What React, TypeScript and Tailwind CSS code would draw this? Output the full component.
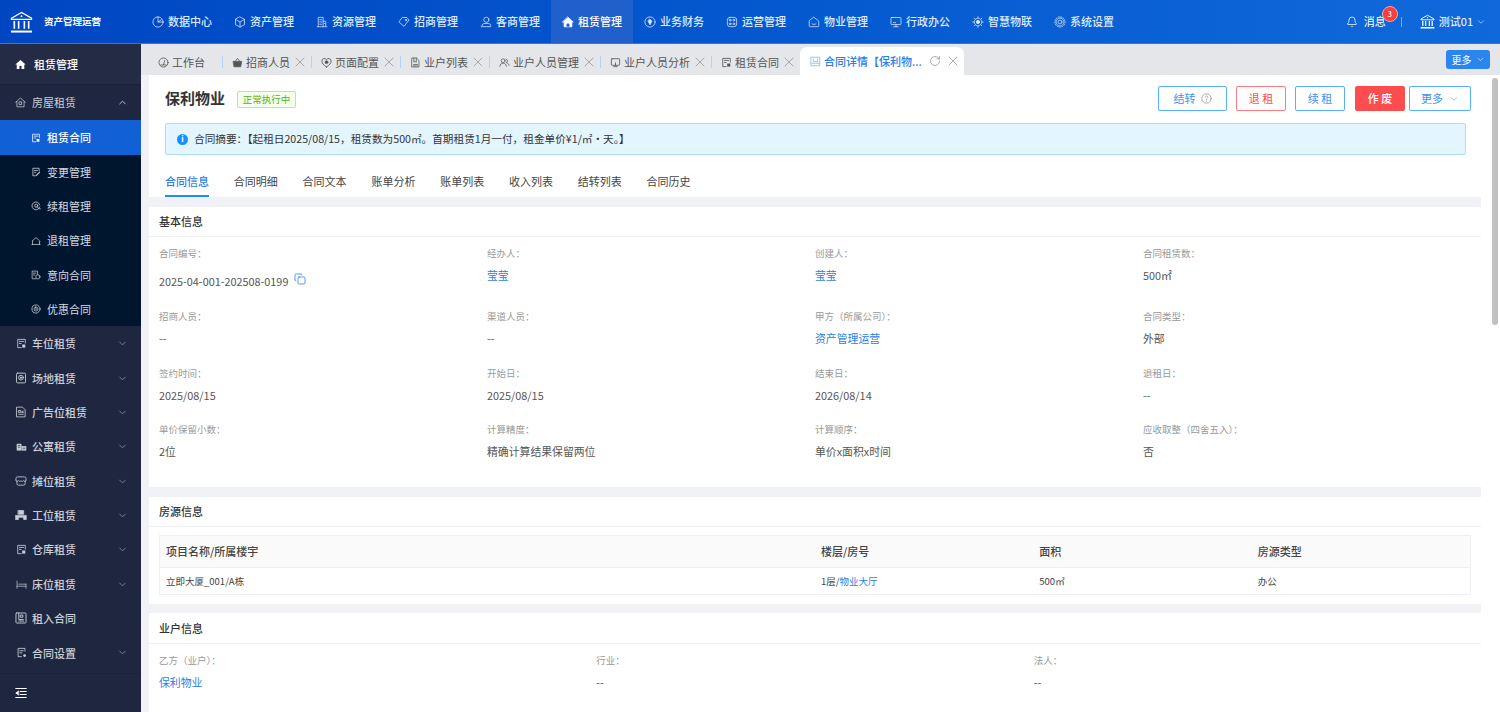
import React from "react";
import { ChevronDown, ChevronUp, X, RotateCw, Copy, Bell } from "lucide-react";

type IconProps = { size?: number; className?: string };
const mk = (children: React.ReactNode, sw = 1) =>
  function Icon({ size = 12, className }: IconProps) {
    return (
      <svg viewBox="0 0 16 16" width={size} height={size} fill="none" stroke="currentColor" strokeWidth={sw} strokeLinecap="round" strokeLinejoin="round" className={`shrink-0 ${className ?? ""}`}>
        {children}
      </svg>
    );
  };

const Pie = mk(<><circle cx="8" cy="8" r="6.8" /><path d="M8 1.2V8h6.6M8 8l4.5-3" /></>);
const Cube = mk(<><path d="M8 1.3l6 3.2v7L8 14.7l-6-3.2v-7z" /><path d="M2 4.5L8 8l6-3.5M8 8v6.7" /></>);
const Build = mk(<><path d="M3 14V1.8h6.5V14M9.5 7H13v7M1.5 14.3h13" /><path d="M5 5h2.5M5 8h2.5M5 11h2.5M11 10h.8" /></>);
const TagI = mk(<><path d="M6.2 2h5.5l3 3.2-6.6 8.6L1.6 8.2z" /><circle cx="10.5" cy="5.4" r="1" /></>);
const User = mk(<><circle cx="8.5" cy="5" r="3.4" /><path d="M1.6 14.2h12.6v-1.4a2.8 2.8 0 0 0-2.8-2.8H5.6a3 3 0 0 0-3 2.8" /></>);
const HomeSolid = mk(<><path d="M8 1.6L15 8h-1.8v6.4H2.8V8H1z" fill="currentColor" /><path d="M6.6 14V10.6h2.8V14" stroke="#2060cc" fill="#2060cc" /></>);
const Coin = mk(<><circle cx="8" cy="8" r="6.8" /><path d="M8 4.4l2.6 2.4L8 11.8 5.4 6.8z" fill="currentColor" /></>);
const Ops = mk(<><rect x="1.8" y="1.8" width="12.4" height="12.4" rx="3.4" /><circle cx="5.5" cy="5.5" r="1.2" /><circle cx="10.5" cy="5.5" r="1.2" /><circle cx="5.5" cy="10.5" r="1.2" /><circle cx="10.5" cy="10.5" r="1.2" /></>);
const HomeSmile = mk(<><path d="M8 1.8l6.4 5v6a1.4 1.4 0 0 1-1.4 1.4H3a1.4 1.4 0 0 1-1.4-1.4v-6z" /><path d="M5.4 10.4c1.4 1.2 3.8 1.2 5.2 0" /></>);
const Screen = mk(<><rect x="1.3" y="2" width="13.4" height="9.4" rx="1" /><path d="M4.8 14.3h6.4M8 11.4v2.9M4.6 8.8h3" /></>);
const Chip = mk(<><circle cx="8" cy="8" r="2.2" fill="currentColor" /><circle cx="8" cy="8" r="5" strokeDasharray="2 1.2" /><path d="M8 1v1.5M8 13.5V15M1 8h1.5M13.5 8H15M3 3l1 1M12 12l1 1M13 3l-1 1M4 12l-1 1" /></>);
const Gear = mk(<><circle cx="8" cy="8" r="2.6" /><circle cx="8" cy="8" r="5.2" strokeDasharray="1.6 1" /><circle cx="8" cy="8" r="6.8" strokeDasharray="1.4 1.8" /></>);

const Gauge = mk(<><circle cx="8" cy="8" r="6.6" /><path d="M8 11.2L9.8 5.2M4 11.6h8" /></>, 1.2);
const Basket = mk(<><path d="M5 6l3-4 3 4" /><path d="M2 6.4h12l-1.4 7.8H3.4z" fill="currentColor" /></>, 1.2);
const HeartP = mk(<><path d="M8 14.5C3.5 11.5 1.3 9 1.3 5.8A3.6 3.6 0 0 1 8 4a3.6 3.6 0 0 1 6.7 1.8C14.7 9 12.5 11.5 8 14.5z" /><circle cx="8" cy="7.6" r="2" fill="currentColor" /></>, 1.3);
const DocList = mk(<><path d="M3 1.5h6.4L13 5v9.5H3z" /><path d="M5.6 1.5v6l1.8-1 1.8 1v-6M5 11h6M5 13h6" /></>, 1.1);
const People = mk(<><circle cx="6" cy="5.4" r="2.8" /><path d="M1.3 13.4c.3-3 2-4.4 4.7-4.4s4.4 1.4 4.7 4.4" /><path d="M10.2 3a2.6 2.6 0 0 1 .4 5c1.9.4 3.6 1.8 4 4.4" /></>, 1.1);
const MiniScreen = mk(<><rect x="2" y="2.5" width="12" height="9.5" rx="1" /><path d="M8 8.5V12M5.5 14h5" /></>, 1.2);
const Doc = mk(<><path d="M13.5 7.5V2h-11v12h5" /><path d="M5 5h6M5 8h2.5" /><rect x="9" y="9.5" width="4.5" height="4.5" fill="currentColor" stroke="none" /></>, 1.2);
const DocEdit = mk(<><path d="M13 6.5V2H3v12h4" /><path d="M5.5 5.5h5M5.5 8.5h2" /><path d="M8.5 13.5l5-5" strokeWidth="1.7" /></>, 1.2);
const Renew = mk(<><path d="M14 9.5A6.3 6.3 0 1 1 14 6" /><circle cx="8.3" cy="7.5" r="2.5" /><path d="M10 9.5l3 3h2" /></>, 1.2);
const HouseLine = mk(<><path d="M2 8l6-5.5L14 8v1.5" /><path d="M1.5 13.5h13M2.5 8v5.5M13.5 9.5v4" /></>, 1.1);
const DocCircle = mk(<><path d="M7.5 14H1.8V1.8h8.7V7" /><path d="M4 5h4M4 8h2" /><circle cx="11" cy="11" r="3.4" /></>, 1.1);
const Target = mk(<><circle cx="8" cy="8" r="6.5" /><rect x="5" y="5" width="6" height="6" rx="2.5" /><path d="M6.5 8h3" /></>, 1.2);
const House = mk(<><path d="M1 7.6L8 1.5l7 6.1" /><path d="M2.8 7v7.3h10.4V7" /><rect x="6.5" y="7" width="3" height="4" /></>, 1.1);
const RectTarget = mk(<><rect x="2" y="1.5" width="12" height="13" rx="1.5" /><circle cx="8" cy="7.5" r="3.2" /><circle cx="8" cy="7.5" r="1" fill="currentColor" /></>, 1.2);
const Paper = mk(<><path d="M2.5 1.5H10l3.5 3.5v9.5h-11z" /><path d="M5 6h2.5v2.5H5zM5 11h6M9 7h2M9 8.7h2" /></>, 1.1);
const Flats = mk(<><path d="M1.5 13V4.5h6V13z" fill="currentColor" /><path d="M8.5 13V8h6v5z" fill="currentColor" /><path d="M3.5 6.5h2M3.5 9h2M10 10.5h3" stroke="#1f2740" /></>, 1);
const Stall = mk(<><path d="M1.3 7V4.500a2 2 0 0 1 2-2h9.4a2 2 0 0 1 2 2V7" /><path d="M2.5 8v3.5a2 2 0 0 0 2 2h7a2 2 0 0 0 2-2V8" /><path d="M1.3 7.5c1.5 1.3 2.5 1.3 3.4 0 1 1.3 2.2 1.3 3.3 0 1.1 1.3 2.3 1.3 3.3 0 1 1.3 2 1.3 3.4 0" /></>, 1.1);
const Desk = mk(<><path d="M4.5 2h7v5h-7z" fill="currentColor" /><path d="M1 8.5h14V14h-3.5v-3h-7v3H1z" fill="currentColor" /></>, 1);
const Bed = mk(<><path d="M1.5 3v10.5M14.5 7.500v6M1.5 10.5h13M4 7.500h10.500" /></>, 1);
const FrameDoc = mk(<><rect x="1.3" y="1.3" width="13.4" height="13.4" rx="1" /><path d="M5 1.500V10h6M5 12h6.500" /><path d="M7.500 4h3v3h-3z" /></>, 1.2);
const DocDot = mk(<><path d="M13 6V2H3v12h5" /><path d="M5.500 5.500h5M5.500 8.500h3" /><circle cx="12.500" cy="12.500" r="2" fill="currentColor" stroke="none" /></>, 1.2);
const Collapse = mk(<><path d="M1 2h14M7 6h8M7 10h8M1 14h14" strokeWidth="1.5" /><path d="M4.500 5.500L1 8l3.500 2.500z" fill="currentColor" /></>, 1);
const BoxTop = mk(<><rect x="1.8" y="1.8" width="12.4" height="12.4" /><path d="M1.8 10.500h12.400M5 4.500V8h6V4.500" /></>, 1.1);
const Help = mk(<><circle cx="8" cy="8" r="6.8" /><path d="M6 6.200a2 2 0 1 1 3.200 1.600c-.8.500-1.200 1-1.200 1.800M8 11.600v.2" /></>, 1);

const Bank = ({ size, h, sw = 1.3 }: { size: number; h: number; sw?: number }) => (
  <svg viewBox="0 0 24 23" width={size} height={h} fill="none" stroke="currentColor" strokeWidth={sw} className="shrink-0">
    <path d="M1.500 7.500L12 1.500l10.500 6v1.300h-21z" />
    <circle cx="12" cy="5.400" r="1" fill="currentColor" stroke="none" />
    <path d="M4.500 10.500v8M9 10.500v8M15 10.500v8M19.500 10.500v8" strokeWidth={sw * 1.3} />
    <path d="M1 21.500h22" strokeWidth={sw * 1.6} />
  </svg>
);

const nav = [
  [Pie, "数据中心"], [Cube, "资产管理"], [Build, "资源管理"], [TagI, "招商管理"], [User, "客商管理"], [HomeSolid, "租赁管理"],
  [Coin, "业务财务"], [Ops, "运营管理"], [HomeSmile, "物业管理"], [Screen, "行政办公"], [Chip, "智慧物联"], [Gear, "系统设置"],
] as const;

const tabs = [
  [Basket, "招商人员", "w-[89px]"], [HeartP, "页面配置", "w-[89px]"], [DocList, "业户列表", "w-[89px]"],
  [People, "业户人员管理", "w-[111px]"], [MiniScreen, "业户人员分析", "w-[111px]"], [Doc, "租赁合同", "w-[89px]"],
] as const;

const subs = [
  [DocEdit, "变更管理"], [Renew, "续租管理"], [HouseLine, "退租管理"], [DocCircle, "意向合同"], [Target, "优惠合同"],
] as const;

const groups = [
  [Doc, "车位租赁", true, 11], [RectTarget, "场地租赁", true, 12], [Paper, "广告位租赁", true, 12], [Flats, "公寓租赁", true, 11], [Stall, "摊位租赁", true, 12],
  [Desk, "工位租赁", true, 12], [Doc, "仓库租赁", true, 11], [Bed, "床位租赁", true, 11], [FrameDoc, "租入合同", false, 12], [DocDot, "合同设置", true, 11],
] as const;

function Field({ label, value, link, h }: { label: string; value: React.ReactNode; link?: boolean; h?: string }) {
  return (
    <div className={h ?? "h-[56px]"}>
      <div className="text-[9.5px] leading-[14px] text-[#999]">{label}</div>
      <div className={`mt-[6.5px] text-[10.85px] leading-[16px] ${link ? "text-[#2b7de9]" : "text-[#555]"}`}>{value}</div>
    </div>
  );
}

function Card({ title, children, className, head }: { title: string; children: React.ReactNode; className?: string; head?: string }) {
  return (
    <section className={`bg-white ${className ?? ""}`}>
      <div className={`flex items-center border-b border-[#eef0f3] px-[10px] text-[11px] font-medium text-[#333] ${head ?? "h-[30px]"}`}>{title}</div>
      {children}
    </section>
  );
}

function Btn({ children, className }: { children: React.ReactNode; className: string }) {
  return <button className={`flex h-[25px] items-center justify-center rounded-[2px] border text-[11px] ${className}`}>{children}</button>;
}

function HomeSolidDark() {
  return (
    <svg viewBox="0 0 16 16" width={11} height={11} className="shrink-0" fill="white">
      <path d="M8 1.500L15.500 8h-2v6.500h-11V8h-2z" />
      <rect x="6.500" y="10" width="3" height="4.500" fill="#232b45" />
    </svg>
  );
}

export default function App() {
  return (
    <div className="flex h-[712px] w-[1500px] flex-col overflow-hidden bg-[#f0f2f5] font-['Noto_Sans_CJK_SC','Noto_Sans',sans-serif]">
      <header className="flex h-[44px] shrink-0 items-center border-b border-[#2a79dc] bg-gradient-to-r from-[#0046c3] to-[#1069da] text-white">
        <div className="flex w-[141px] shrink-0 items-center pl-[10px]">
          <Bank size={23} h={22} />
          <span className="ml-[11px] text-[9.5px] font-bold">资产管理运营</span>
        </div>
        <nav className="flex h-full">
          {nav.map(([I, t], i) => (
            <div key={t} className={`flex h-full w-[82px] items-center gap-[4px] pl-[11px] text-[11px] font-medium ${i === 5 ? "bg-[#2060cc] text-white" : "text-[#dfeafa]"}`}>
              <I size={12} />
              <span>{t}</span>
            </div>
          ))}
        </nav>
        <div className="ml-auto flex items-center pr-[14px] text-[11px]">
          <Bell size={12} strokeWidth={1.5} />
          <span className="relative ml-[6px]">
            消息
            <span className="absolute left-[18px] top-[-7px] flex h-[16px] w-[16px] items-center justify-center rounded-full border border-[#f5a3a3] bg-[#f4403f] text-[8px]">3</span>
          </span>
          <span className="ml-[15px] h-[10px] w-px bg-[#7aa7e8]" />
          <span className="ml-[18px]"><Bank size={15} h={15} sw={1.5} /></span>
          <span className="ml-[4px]">测试01</span>
          <ChevronDown size={10} strokeWidth={1.5} className="ml-[3px] text-[#cfe0f8]" />
        </div>
      </header>

      <div className="flex min-h-0 flex-1">
        <aside className="flex w-[141px] shrink-0 flex-col bg-[#1f2740] text-[11px] text-[#c9ced8]">
          <div className="flex h-[41px] shrink-0 items-center gap-[8px] border-b border-[#1a2238] bg-[#232b45] pl-[15px] font-medium text-white">
            <HomeSolidDark /> 租赁管理
          </div>
          <div className="flex h-[35px] shrink-0 items-center pl-[15px] pr-[13px]">
            <House size={11} className="mr-[6px]" /> 房屋租赁
            <ChevronUp size={11} strokeWidth={2} className="ml-auto" />
          </div>
          <div className="flex h-[35px] shrink-0 items-center gap-[6px] bg-[#1160d6] pl-[31px] font-medium text-white">
            <Doc size={10} /> 租赁合同
          </div>
          <div className="bg-[#00162e]">
            {subs.map(([I, t]) => (
              <div key={t} className="flex h-[34.3px] items-center gap-[6px] pl-[31px] text-[#d5dae2]">
                <I size={10} /> {t}
              </div>
            ))}
          </div>
          {groups.map(([I, t, c, s]) => (
            <div key={t} className="flex h-[34.35px] shrink-0 items-center pr-[13px] font-medium">
              <span className="flex w-[32px] justify-center pl-[10px]"><I size={s} /></span> {t}
              {c && <ChevronDown size={11} strokeWidth={1.7} className="ml-auto text-[#8e96a8]" />}
            </div>
          ))}
          <div className="mt-auto flex h-[39px] shrink-0 items-center border-t border-[#1b2339] pl-[15px] text-white">
            <Collapse size={12} />
          </div>
        </aside>

        <main className="flex min-w-0 flex-1 flex-col">
          <div className="flex h-[31px] shrink-0 items-end bg-[#e4e6e9] pl-[8px] text-[11px] text-[#555]">
            <div className="mb-[7px] flex h-[12px] w-[73px] items-center gap-[3px] pl-[9px]">
              <Gauge size={11} /> 工作台
            </div>
            {tabs.map(([I, t, w]) => (
              <div key={t} className={`mb-[7px] flex h-[12px] items-center border-l border-[#b6d4f2] pl-[9px] pr-[3px] ${w}`}>
                <I size={11} className="mr-[3px]" /> {t}
                <X size={16} strokeWidth={1} className="ml-auto shrink-0 text-[#888]" />
              </div>
            ))}
            <div className="flex h-[28px] w-[164px] items-center rounded-t-[7px] bg-white pl-[10px] pr-[3px] font-medium text-[#2b7de9]">
              <BoxTop size={11} className="mr-[3px] text-[#7db0f0]" /> 合同详情【保利物...
              <RotateCw size={12} strokeWidth={1.2} className="ml-auto shrink-0 text-[#777]" />
              <X size={16} strokeWidth={1} className="ml-[4px] shrink-0 text-[#888]" />
            </div>
            <div className="mb-[6px] ml-auto mr-[10px] flex h-[19px] w-[44px] items-center justify-center gap-[4px] self-end rounded-[3px] bg-[#2b85ee] text-[10px] text-white">
              更多 <ChevronDown size={9} strokeWidth={1.5} />
            </div>
          </div>

          <div className="flex min-h-0 flex-1">
            <div className="min-w-0 flex-1 overflow-hidden pl-[8px]">
              <div className="h-[122px] bg-white pl-[16px] pr-[10px] pt-[11px]">
                <div className="flex h-[25px] items-center">
                  <h1 className="text-[15px] font-bold text-[#333]">保利物业</h1>
                  <span className="ml-[12px] mt-[2px] flex h-[17px] w-[59px] items-center justify-center rounded-[2px] border border-[#b7eb8f] bg-[#f6ffed] text-[9.5px] text-[#52b31c]">正常执行中</span>
                  <div className="ml-auto flex items-center">
                    <Btn className="w-[69px] gap-[5px] border-[#58aeff] text-[#3f93ee]">结转 <Help size={11} className="text-[#888]" /></Btn>
                    <Btn className="ml-[9px] w-[50px] border-[#ff7a80] text-[#ff4d4f]">退 租</Btn>
                    <Btn className="ml-[9px] w-[50px] border-[#58aeff] text-[#3f93ee]">续 租</Btn>
                    <Btn className="ml-[10px] w-[50px] border-[#ff4d4f] bg-[#ff4d4f] font-medium text-white">作 废</Btn>
                    <Btn className="ml-[4px] w-[62px] gap-[6px] border-[#58aeff] text-[#3f93ee]">更多 <ChevronDown size={10} strokeWidth={1.5} /></Btn>
                  </div>
                </div>
                <div className="mr-[5px] mt-[12px] flex h-[32px] items-center rounded-[2px] border border-[#aedcfb] bg-[#e3f5ff] pl-[11px] text-[10.65px] text-[#333]">
                  <span className="mr-[6px] flex h-[11px] w-[11px] shrink-0 items-center justify-center rounded-full bg-[#1890ff] text-[8px] font-bold leading-none text-white">i</span>
                  合同摘要：【起租日2025/08/15，租赁数为500㎡。首期租赁1月一付，租金单价¥1/㎡·天。】
                </div>
                <div className="mt-[12px] flex gap-[24.8px] text-[11px] text-[#444]">
                  <span className="h-[30px] border-b-2 border-[#1f8bf5] pt-[6px] font-medium text-[#2b7de9]">合同信息</span>
                  {["合同明细", "合同文本", "账单分析", "账单列表", "收入列表", "结转列表", "合同历史"].map((t) => (
                    <span key={t} className="pt-[6px]">{t}</span>
                  ))}
                </div>
              </div>

              <Card title="基本信息" className="mt-[10px] h-[280px]">
                <div className="grid grid-cols-4 px-[10px] pt-[9px]">
                  <Field h="h-[63px]" label="合同编号：" value={<span className="relative top-[6px] inline-flex items-center gap-[6px]">2025-04-001-202508-0199 <Copy size={12} strokeWidth={1.6} className="-mt-[3px] text-[#2b85ee]" /></span>} />
                  <Field h="h-[63px]" label="经办人：" value="莹莹" link />
                  <Field h="h-[63px]" label="创建人：" value="莹莹" link />
                  <Field h="h-[63px]" label="合同租赁数：" value="500㎡" />
                  <Field h="h-[57px]" label="招商人员：" value="--" />
                  <Field h="h-[57px]" label="渠道人员：" value="--" />
                  <Field h="h-[57px]" label="甲方（所属公司）：" value="资产管理运营" link />
                  <Field h="h-[57px]" label="合同类型：" value="外部" />
                  <Field label="签约时间：" value="2025/08/15" />
                  <Field label="开始日：" value="2025/08/15" />
                  <Field label="结束日：" value="2026/08/14" />
                  <Field label="退租日：" value="--" />
                  <Field label="单价保留小数：" value="2位" />
                  <Field label="计算精度：" value="精确计算结果保留两位" />
                  <Field label="计算顺序：" value="单价x面积x时间" />
                  <Field label="应收取整（四舍五入）：" value="否" />
                </div>
              </Card>

              <Card title="房源信息" className="mt-[10px] h-[107px]">
                <div className="px-[10px] pt-[8px]">
                  <div className="border border-[#eef0f3]">
                    <div className="grid h-[31px] grid-cols-[3fr_1fr_1fr_1fr] items-center bg-[#fafafa] text-[11px] font-medium text-[#444]">
                      <span className="pl-[6px]">项目名称/所属楼宇</span>
                      <span className="pl-[6px]">楼层/房号</span>
                      <span className="pl-[6px]">面积</span>
                      <span className="pl-[6px]">房源类型</span>
                    </div>
                    <div className="grid h-[27px] grid-cols-[3fr_1fr_1fr_1fr] items-center border-t border-[#eef0f3] text-[9.5px] text-[#444]">
                      <span className="pl-[6px]">立即大厦_001/A栋</span>
                      <span className="pl-[6px]">1层/<span className="text-[#2b7de9]">物业大厅</span></span>
                      <span className="pl-[6px]">500㎡</span>
                      <span className="pl-[6px]">办公</span>
                    </div>
                  </div>
                </div>
              </Card>

              <Card title="业户信息" className="mt-[9px] h-[120px]" head="h-[31px] pt-[1px]">
                <div className="grid grid-cols-3 px-[10px] pt-[9px]">
                  <Field label="乙方（业户）：" value="保利物业" link />
                  <Field label="行业：" value="--" />
                  <Field label="法人：" value="--" />
                </div>
              </Card>
            </div>
            <div className="w-[19px] shrink-0 bg-white pl-[11px] pt-[3px]">
              <div className="h-[247px] w-[6px] rounded-full bg-[#c1c1c1]" />
            </div>
          </div>
        </main>
      </div>
    </div>
  );
}
